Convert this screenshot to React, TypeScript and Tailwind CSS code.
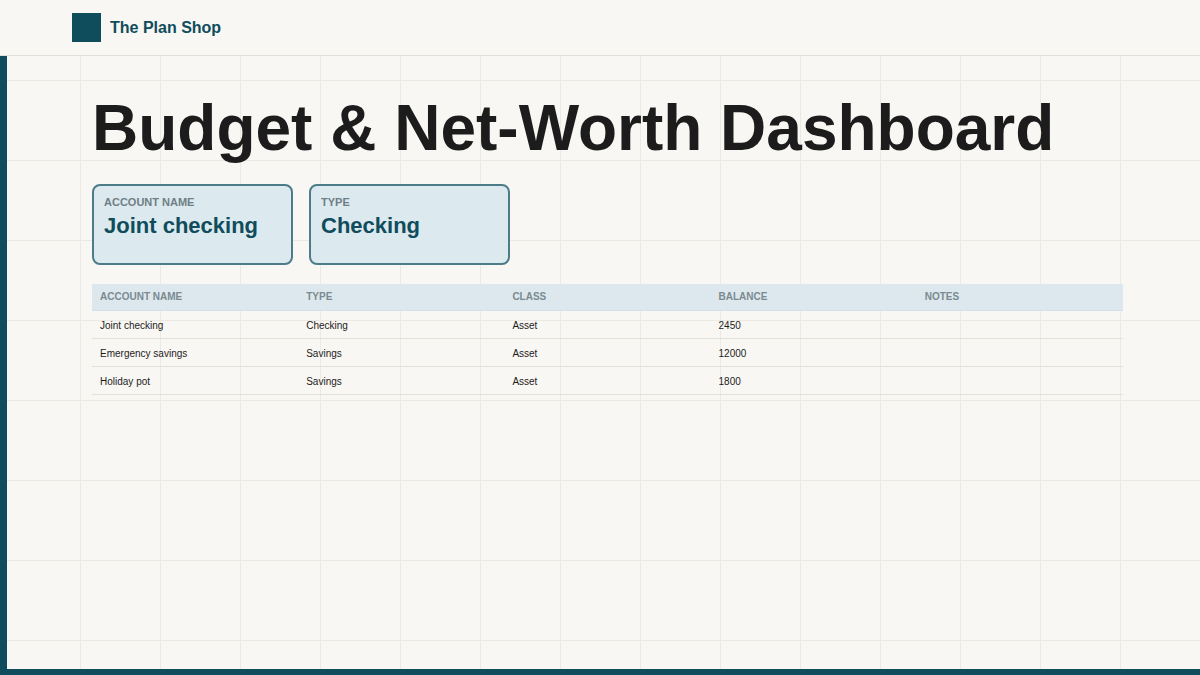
const accounts = [
  { name: "Joint checking", type: "Checking", cls: "Asset", balance: "2450", notes: "" },
  { name: "Emergency savings", type: "Savings", cls: "Asset", balance: "12000", notes: "" },
  { name: "Holiday pot", type: "Savings", cls: "Asset", balance: "1800", notes: "" },
];

const columns = ["Account name", "Type", "Class", "Balance", "Notes"];

export default function App() {
  return (
    <div className="relative h-[675px] w-[1200px] overflow-hidden bg-[#f9f7f3] bg-[linear-gradient(to_right,#ece8e2_1px,transparent_1px),linear-gradient(to_bottom,#ece8e2_1px,transparent_1px)] bg-[size:80px_80px] font-[family-name:Liberation_Sans,Arial,sans-serif]">
      {/* Header */}
      <header className="flex h-[56px] items-center gap-[9px] border-b border-[#e2ded8] bg-[#f9f7f3] pl-[72px]">
        <div className="h-[29px] w-[29px] bg-[#0f4c5c]" />
        <span className="text-[16px] font-bold text-[#0f4c5c]">The Plan Shop</span>
      </header>

      <div className="flex h-[613px]">
        <div className="w-[7px] bg-[#0f4c5c]" />
        <main className="flex-1 pl-[85px] pr-[70px]">
          <h1 className="mt-[34px] text-[64px] font-bold leading-[76px] text-[#1c1c1c]">
            Budget &amp; Net-Worth Dashboard
          </h1>

          {/* Selected account cards */}
          <div className="mt-[18px] flex gap-[16px]">
            {[
              ["Account name", "Joint checking"],
              ["Type", "Checking"],
            ].map(([label, value]) => (
              <div
                key={label}
                className="h-[81px] w-[201px] rounded-[8px] border-2 border-[#4d7c89] bg-[#dce9ee] px-[10px] pt-[9px]"
              >
                <div className="text-[11px] font-bold uppercase leading-[14px] text-[#6e7f85]">{label}</div>
                <div className="mt-[3px] text-[22px] font-bold leading-[28px] text-[#0f4c5c]">{value}</div>
              </div>
            ))}
          </div>

          {/* Accounts table */}
          <table className="mt-[19px] w-[1031px] table-fixed border-collapse text-left">
            <thead>
              <tr className="h-[26px] bg-[#dce8ed]">
                {columns.map((c) => (
                  <th
                    key={c}
                    className="border-b border-[#d4e0e5] px-[8px] text-[10px] font-bold uppercase text-[#7a8a90]"
                  >
                    {c}
                  </th>
                ))}
              </tr>
            </thead>
            <tbody>
              {accounts.map((a) => (
                <tr key={a.name} className="h-[28px] border-b border-[#e4e0da]">
                  {[a.name, a.type, a.cls, a.balance, a.notes].map((v, i) => (
                    <td key={i} className="px-[8px] pt-[2px] text-[10px] text-[#1c1c1c]">
                      {v}
                    </td>
                  ))}
                </tr>
              ))}
            </tbody>
          </table>
        </main>
      </div>

      <div className="h-[6px] bg-[#0f4c5c]" />
    </div>
  );
}
